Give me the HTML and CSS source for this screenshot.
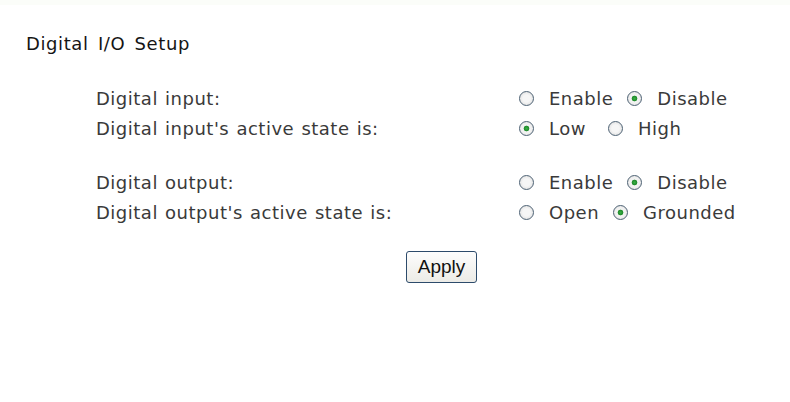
FILE: index.html
```html
<!DOCTYPE html>
<html>
<head>
<meta charset="utf-8">
<link rel="stylesheet" href="styles.css">
</head>
<body>
<div class="topbar"></div>
<div class="page">
  <h1 class="title">Digital I/O Setup</h1>
  <div class="group">
    <div class="row">
      <span class="label">Digital input:</span>
      <span class="opts">
        <label class="opt"><input type="radio" name="di"><span>Enable</span></label>
        <label class="opt"><input type="radio" name="di" checked><span>Disable</span></label>
      </span>
    </div>
    <div class="row">
      <span class="label">Digital input's active state is:</span>
      <span class="opts">
        <label class="opt opt-wide"><input type="radio" name="dis" checked><span>Low</span></label>
        <label class="opt"><input type="radio" name="dis"><span>High</span></label>
      </span>
    </div>
  </div>
  <div class="group">
    <div class="row">
      <span class="label">Digital output:</span>
      <span class="opts">
        <label class="opt"><input type="radio" name="do"><span>Enable</span></label>
        <label class="opt"><input type="radio" name="do" checked><span>Disable</span></label>
      </span>
    </div>
    <div class="row">
      <span class="label">Digital output's active state is:</span>
      <span class="opts">
        <label class="opt"><input type="radio" name="dos"><span>Open</span></label>
        <label class="opt"><input type="radio" name="dos" checked><span>Grounded</span></label>
      </span>
    </div>
  </div>
  <div class="actions"><button class="apply">Apply</button></div>
</div>
</body>
</html>
```
FILE: styles.css
```css
html, body { margin: 0; padding: 0; background: #fff; }
body { font-family: "DejaVu Sans", Verdana, sans-serif; font-size: 18px; color: #3a3a3a; letter-spacing: 0.5px; word-spacing: 1px; }
.topbar { height: 5px; background: #fbfdf9; }
.page { padding: 27px 0 0 26px; }
.title { margin: 0; font-size: 18px; font-weight: normal; color: #151515; line-height: 24px; letter-spacing: 0.6px; word-spacing: 3px; }
.group { margin-left: 70px; margin-top: 27px; }
.group + .group { margin-top: 24px; }
.row { display: flex; height: 30px; align-items: center; }
.label { width: 423px; }
.opts { display: flex; gap: 14px; }
.opt { display: flex; align-items: center; }
.opt span { margin-left: 15px; }
.opt-wide { margin-right: 8px; }
.opt input {
  appearance: none; -webkit-appearance: none; margin: 0;
  width: 15px; height: 15px; border-radius: 50%;
  border: 1px solid #4e6274; box-sizing: border-box;
  background: radial-gradient(circle at 50% 50%, #f6f6f6 40%, #d6d6d6 100%);
}
.opt input:checked {
  background: radial-gradient(circle at 50% 50%, #38b043 0, #1f8a2b 2.5px, #f4f4f4 3.2px, #f0f0f0 55%, #d6d6d6 100%);
}
.actions { display: flex; margin-top: 24px; padding-left: 380px; }
.apply {
  font-family: "Liberation Sans", Arial, sans-serif; font-size: 19px; color: #111; letter-spacing: 0; word-spacing: 0;
  padding: 0 6px; height: 32px; width: 71px;
  border: 1px solid #2d4b6b; border-radius: 3px;
  background: linear-gradient(#fdfdfd, #ecebe6);
}
```
